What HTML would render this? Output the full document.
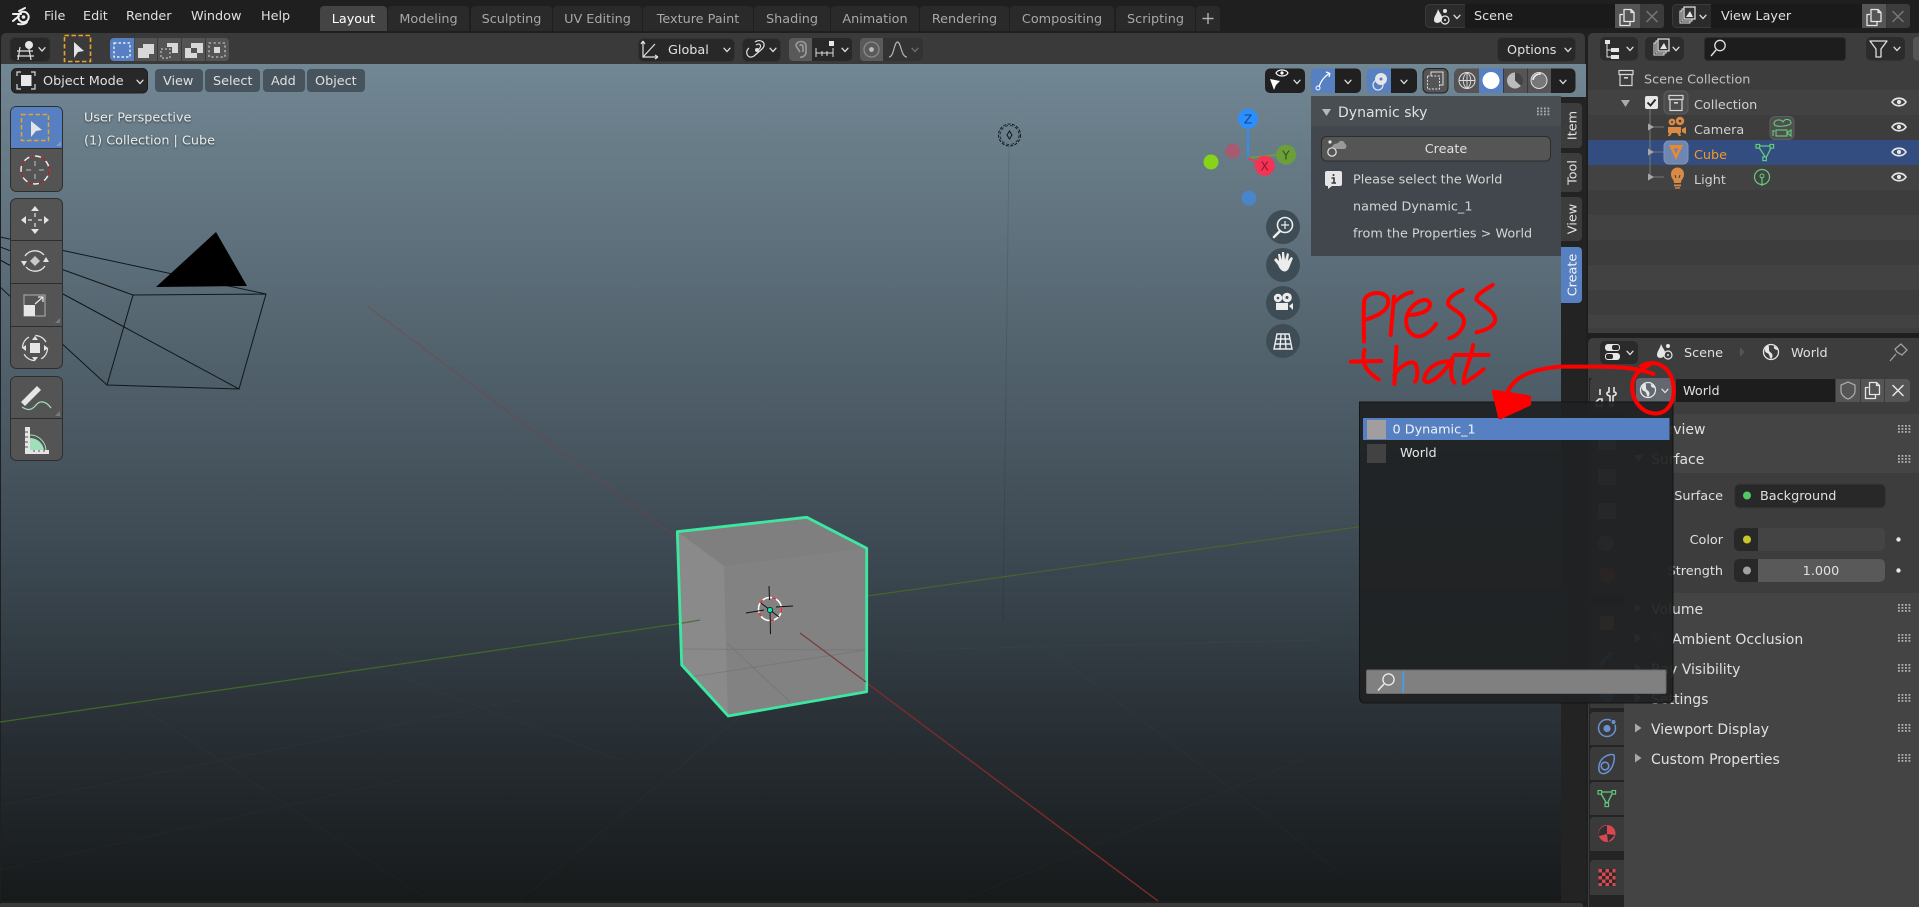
<!DOCTYPE html>
<html>
<head>
<meta charset="utf-8">
<title>Blender</title>
<style>
html,body{margin:0;padding:0;background:#1f1f1f;width:1919px;height:907px;overflow:hidden}
svg{display:block;position:absolute;left:0;top:0;filter:blur(.3px)}
text{font-family:"DejaVu Sans","Liberation Sans",sans-serif;font-size:12.8px;fill:#d9d9d9}
.tab{fill:#a8a8a8;text-anchor:middle}
.act{fill:#fff}
.m{fill:#e0e0e0}
.h{font-size:14px;fill:#e0e0e0}
.s{filter:drop-shadow(0 1px 1px rgba(0,0,0,.55))}
.red{fill:none;stroke:#f00;stroke-width:4;stroke-linecap:round;stroke-linejoin:round}
.red *{vector-effect:non-scaling-stroke}
</style>
</head>
<body>
<svg width="1919" height="907" viewBox="0 0 1919 907" xmlns="http://www.w3.org/2000/svg">
<defs>
<linearGradient id="bg" x1="0" y1="64" x2="0" y2="901" gradientUnits="userSpaceOnUse">
<stop offset="0" stop-color="#718793"/>
<stop offset=".3" stop-color="#566772"/>
<stop offset=".6" stop-color="#3b4750"/>
<stop offset=".85" stop-color="#23292d"/>
<stop offset="1" stop-color="#171a1b"/>
</linearGradient>
<g id="ch"><path d="M-3,-1.8 L0,1.6 L3,-1.8" fill="none" stroke="#dcdcdc" stroke-width="1.3" stroke-linecap="round" stroke-linejoin="round"/></g>
<g id="grip" fill="#b0b0b0"><rect x="0" y="0" width="1.8" height="1.8"/><rect x="3.5" y="0" width="1.8" height="1.8"/><rect x="7" y="0" width="1.8" height="1.8"/><rect x="10.5" y="0" width="1.8" height="1.8"/><rect x="0" y="3" width="1.8" height="1.8"/><rect x="3.5" y="3" width="1.8" height="1.8"/><rect x="7" y="3" width="1.8" height="1.8"/><rect x="10.5" y="3" width="1.8" height="1.8"/><rect x="0" y="6" width="1.8" height="1.8"/><rect x="3.5" y="6" width="1.8" height="1.8"/><rect x="7" y="6" width="1.8" height="1.8"/><rect x="10.5" y="6" width="1.8" height="1.8"/></g>
<g id="eye"><path d="M-7,0 C-4,-5 4,-5 7,0 C4,5 -4,5 -7,0 Z" fill="none" stroke="#e6e6e6" stroke-width="1.7"/><circle r="2.1" fill="#e6e6e6"/></g>
<g id="globe"><circle r="7.5" fill="none" stroke="#e6e6e6" stroke-width="1.3"/><path d="M-3,-7 C-7,-4 -7,0 -4,1 C-1,2 -2,5 0,7 C3,4 1,1 -1,0 C-3,-2 -1,-5 -3,-7 Z M3,-6 C2,-3 5,-2 7,-2 C6,-4 5,-5 3,-6 Z" fill="#e6e6e6"/></g>
<g id="scn"><path d="M-7,3 C-7,-1 -4,-3 -3,-8 C-1,-3 2,-1 1,2 C0,7 -7,7 -7,3 Z" fill="#e6e6e6"/><circle cx="4" cy="3" r="4" fill="none" stroke="#e6e6e6" stroke-width="1.2"/><circle cx="4" cy="3" r="1" fill="#e6e6e6"/><circle cx="4" cy="-6" r="2" fill="#e6e6e6"/></g>
<g id="vl"><rect x="-7" y="-5" width="10" height="12" fill="none" stroke="#e6e6e6" stroke-width="1"/><rect x="-5" y="-7" width="10" height="12" fill="#333" stroke="#e6e6e6" stroke-width="1"/><rect x="-3" y="-9" width="11" height="12" fill="#333" stroke="#e6e6e6" stroke-width="1.2"/><path d="M-1,1 L3,-5 L6,1 Z" fill="#e6e6e6"/></g>
<g id="copy"><path d="M-4,-3 L-7,-3 L-7,8 L3,8 L3,4 M-3,-8 L4,-8 L7,-5 L7,4 L-3,4 Z M4,-8 L4,-5 L7,-5" fill="none" stroke="#e6e6e6" stroke-width="1.3" stroke-linejoin="round"/></g>
<g id="x"><path d="M-5,-5 L5,5 M5,-5 L-5,5" fill="none" stroke-width="1.5" stroke-linecap="round"/></g>
<g id="tri"><path d="M-3,-4.5 L3.5,0 L-3,4.5 Z" fill="#a8a8a8"/></g>
<g id="coll"><rect x="-7" y="-7.5" width="14" height="4" fill="none" stroke="#d5d5d5" stroke-width="1.2"/><rect x="-6" y="-3.5" width="12" height="11" fill="none" stroke="#d5d5d5" stroke-width="1.2"/><rect x="-2" y="-1" width="4" height="1.6" fill="#d5d5d5"/></g>
</defs>

<!-- base -->
<rect width="1919" height="907" fill="#1f1f1f"/>

<!-- TOP BAR -->
<g>
<circle cx="23.5" cy="17" r="5.2" fill="none" stroke="#efefef" stroke-width="2"/>
<circle cx="23.5" cy="17" r="1.8" fill="#efefef"/>
<path d="M19,11 L25,8 M13,14 L21,14 M13,21 L19,16 M18,24 C21,24.5 25,24.5 27,22" fill="none" stroke="#efefef" stroke-width="2" stroke-linecap="round"/>
<text x="44" y="20" class="m">File</text>
<text x="83" y="20" class="m">Edit</text>
<text x="126" y="20" class="m">Render</text>
<text x="191" y="20" class="m">Window</text>
<text x="261" y="20" class="m">Help</text>

<path d="M320,31 V10 a4,4 0 0 1 4,-4 H383 a4,4 0 0 1 4,4 V31 Z" fill="#444"/>
<text x="353.5" y="23" class="tab act">Layout</text>
<g fill="#2a2a2a">
<path d="M388,31 V10 a4,4 0 0 1 4,-4 H465 a4,4 0 0 1 4,4 V31 Z"/>
<path d="M471,31 V10 a4,4 0 0 1 4,-4 H548 a4,4 0 0 1 4,4 V31 Z"/>
<path d="M553,31 V10 a4,4 0 0 1 4,-4 H638 a4,4 0 0 1 4,4 V31 Z"/>
<path d="M643,31 V10 a4,4 0 0 1 4,-4 H749 a4,4 0 0 1 4,4 V31 Z"/>
<path d="M754,31 V10 a4,4 0 0 1 4,-4 H826 a4,4 0 0 1 4,4 V31 Z"/>
<path d="M831,31 V10 a4,4 0 0 1 4,-4 H915 a4,4 0 0 1 4,4 V31 Z"/>
<path d="M920,31 V10 a4,4 0 0 1 4,-4 H1005 a4,4 0 0 1 4,4 V31 Z"/>
<path d="M1010,31 V10 a4,4 0 0 1 4,-4 H1110 a4,4 0 0 1 4,4 V31 Z"/>
<path d="M1116,31 V10 a4,4 0 0 1 4,-4 H1191 a4,4 0 0 1 4,4 V31 Z"/>
<path d="M1196,31 V10 a4,4 0 0 1 4,-4 H1216 a4,4 0 0 1 4,4 V31 Z"/>
</g>
<text x="428.5" y="23" class="tab">Modeling</text>
<text x="511.5" y="23" class="tab">Sculpting</text>
<text x="597.5" y="23" class="tab">UV Editing</text>
<text x="698" y="23" class="tab">Texture Paint</text>
<text x="792" y="23" class="tab">Shading</text>
<text x="875" y="23" class="tab">Animation</text>
<text x="964.5" y="23" class="tab">Rendering</text>
<text x="1062" y="23" class="tab">Compositing</text>
<text x="1155.5" y="23" class="tab">Scripting</text>
<path d="M1208,13 V24 M1202.5,18.5 H1213.5" stroke="#b0b0b0" stroke-width="1.4" fill="none"/>

<!-- scene selector -->
<rect x="1425.5" y="4.5" width="238" height="23" rx="4" fill="#2b2b2b" stroke="#3a3a3a"/>
<rect x="1465" y="4" width="150" height="24" fill="#1a1a1a"/>
<rect x="1615" y="4" width="25" height="24" fill="#555"/>
<rect x="1640" y="4" width="24" height="24" rx="3" fill="#3c3c3c"/>
<use href="#scn" x="1441" y="17"/><use href="#ch" x="1457" y="17"/>
<text x="1474" y="20" class="m">Scene</text>
<use href="#copy" x="1627" y="17.5"/>
<use href="#x" x="1652" y="16.5" stroke="#777"/>
<rect x="1672.5" y="4.5" width="237" height="23" rx="4" fill="#2b2b2b" stroke="#3a3a3a"/>
<rect x="1711" y="4" width="151" height="24" fill="#1a1a1a"/>
<rect x="1862" y="4" width="24" height="24" fill="#555"/>
<rect x="1886" y="4" width="24" height="24" rx="3" fill="#3c3c3c"/>
<use href="#vl" x="1687" y="16"/><use href="#ch" x="1703" y="17"/>
<text x="1721" y="20" class="m">View Layer</text>
<use href="#copy" x="1874" y="17.5"/>
<use href="#x" x="1898" y="16.5" stroke="#777"/>
</g>

<!-- 3D VIEW HEADER -->
<path d="M1,64 V38 a5,5 0 0 1 5,-5 H1580 a5,5 0 0 1 5,5 V64 Z" fill="#3a3a3a"/>
<rect x="1" y="64" width="1585" height="837" fill="url(#bg)"/>

<!-- header items -->
<rect x="10" y="37.5" width="40" height="24" rx="5" fill="#282828" stroke="#333"/>
<circle cx="29" cy="45" r="4" fill="#e6e6e6"/>
<path d="M17,51 H33 M17,56 H34 M20,47 L18,60 M29,49 L31,60" stroke="#e0e0e0" stroke-width="1.2" fill="none"/>
<use href="#ch" x="42" y="49.5"/>
<rect x="64.5" y="35.5" width="26" height="26" fill="none" stroke="#e8a32b" stroke-width="1.6" stroke-dasharray="4.5 2.5"/>
<path d="M74,42 L84,51 L78,52 L74,58 Z" fill="#e4e4e4"/>

<path d="M114,38 H134 V61 H114 a4,4 0 0 1 -4,-4 V42 a4,4 0 0 1 4,-4 Z" fill="#5680c2"/>
<rect x="134.5" y="38" width="22.5" height="23" fill="#545454"/>
<rect x="158" y="38" width="23" height="23" fill="#545454"/>
<rect x="182" y="38" width="23" height="23" fill="#545454"/>
<path d="M206,38 H225 a4,4 0 0 1 4,4 V57 a4,4 0 0 1 -4,4 H206 Z" fill="#545454"/>
<rect x="114" y="43" width="16" height="14" fill="none" stroke="#fff" stroke-width="1.2" stroke-dasharray="2.5 2"/>
<path d="M143,44 H154 V54 H149 V58 H138 V48 H143 Z" fill="#d8d8d8"/>
<path d="M167,43 H178 V53 H172 V47 H167 Z" fill="#d8d8d8"/><rect x="161" y="49" width="9" height="9" fill="none" stroke="#d8d8d8" stroke-dasharray="2 2"/>
<path d="M191,43 H203 V53 H197 V58 H185 V48 H191 Z M191,48 V53 H197 V48 Z" fill="#d8d8d8" fill-rule="evenodd"/>
<rect x="209" y="43" width="16" height="14" fill="none" stroke="#d8d8d8" stroke-width="1.1" stroke-dasharray="2.2 2.4"/>
<rect x="214" y="47" width="6" height="6" fill="#d8d8d8"/>

<!-- center header -->
<rect x="638.5" y="38.5" width="96" height="23" rx="5" fill="#282828" stroke="#333"/>
<path d="M643,41 L643,57 L658,57 M643,57 L655,44 M643,41 l-2,3 M643,41 l2,3 M658,57 l-3,-2 M658,57 l-3,2" fill="none" stroke="#e0e0e0" stroke-width="1.2"/>
<text x="668" y="54" class="m">Global</text>
<use href="#ch" x="727" y="50"/>
<rect x="742.5" y="38.5" width="38" height="23" rx="5" fill="#282828" stroke="#333"/>
<path d="M755,42 C760,38 768,43 762,49 L754,56 C748,60 744,52 749,48 M756,45 C761,42 762,47 758,50" fill="none" stroke="#e0e0e0" stroke-width="1.2"/>
<circle cx="757" cy="50" r="2" fill="#e0e0e0"/>
<use href="#ch" x="773" y="50"/>
<path d="M793,38 H812 V61 H793 a4,4 0 0 1 -4,-4 V42 a4,4 0 0 1 4,-4 Z" fill="#595959"/>
<path d="M812,38 H848 a4,4 0 0 1 4,4 V57 a4,4 0 0 1 -4,4 H812 Z" fill="#282828"/>
<path d="M796,46 C796,40 806,40 806,46 L806,52 C806,55 803,58 800,57 M800,46 C800,44 803,44 803,47 L803,52 M796,46 L800,52" fill="none" stroke="#9b9b9b" stroke-width="1.6"/>
<rect x="829" y="41" width="5" height="5" fill="#e6e6e6"/>
<path d="M816,48 V57 M833,48 V57 M816,53 H833 M822,51 V56 M827,51 V56" stroke="#dcdcdc" fill="none"/>
<use href="#ch" x="845" y="50"/>
<path d="M864,38 H883 V61 H864 a4,4 0 0 1 -4,-4 V42 a4,4 0 0 1 4,-4 Z" fill="#5a5a5a"/>
<path d="M883,38 H919 a4,4 0 0 1 4,4 V57 a4,4 0 0 1 -4,4 H883 Z" fill="#333"/>
<circle cx="871.5" cy="49.5" r="7.5" fill="none" stroke="#8a8a8a" stroke-width="1.3"/><circle cx="871.5" cy="49.5" r="2.4" fill="#bbb"/>
<path d="M889,57 C894,57 894,42 897.5,42 C901,42 901,57 907,57" fill="none" stroke="#b5b5b5" stroke-width="1.2"/>
<use href="#ch" x="915" y="50" opacity=".35"/>
<rect x="1497.5" y="37.5" width="78" height="24" rx="5" fill="#282828" stroke="#333"/>
<text x="1507" y="54" class="m">Options</text>
<use href="#ch" x="1568" y="50"/>

<!-- axes & grid -->
<g fill="none" stroke-width="1">
<path d="M0,805 L520,700 M0,870 L400,780 M520,900 L760,700 M130,700 L430,901 M330,650 L620,760 M1050,650 L1350,880 M960,901 L1300,760 M900,650 L1320,640" stroke="#fff" stroke-opacity=".025"/>
<path d="M1009,147 L1003,620" stroke="#000" stroke-opacity=".1"/>
<path d="M367,306 L677,538" stroke="#8a3a3e" stroke-opacity=".45" stroke-width="1.2"/>
<path d="M800,633 L1158,901" stroke="#7b2c2c" stroke-width="1.4"/>
<path d="M0,722 L677,624" stroke="#41662a" stroke-width="1.3"/>
<path d="M867,596 L1365,526" stroke="#45652e" stroke-width="1.2"/>
</g>

<!-- camera -->
<g fill="none" stroke="#10171b" stroke-width="1">
<path d="M0,237 L266,294 L239,389 L107,385 L133,295 L266,294"/>
<path d="M0,247 L133,295 M0,260 L239,389 M0,287 L107,385"/>
</g>
<path d="M216,232 L156,287 L247,286 Z" fill="#000"/>

<!-- light icon -->
<g fill="none" stroke="#12181c" stroke-width="1">
<circle cx="1009.5" cy="135" r="11" stroke-dasharray="3 1.5" stroke-width="1"/>
<circle cx="1009.5" cy="135" r="9.5" stroke-dasharray="3 2" stroke-width=".8"/>
<path d="M1009.5,131 L1012,135 L1009.5,139 L1007,135 Z"/>
</g>

<!-- cube -->
<path d="M677.3,531.7 L806.7,517.3 L866.7,548.3 L866.7,691.7 L728.3,716 L681.7,665 Z" fill="#858585"/>
<path d="M677.3,531.7 L806.7,517.3 L866.7,548.3 L724,566 Z" fill="#7f7f7f"/>
<path d="M677.3,531.7 L724,566 L728,716 L681.7,665 Z" fill="#8a8a8a"/>
<path d="M724,566 L866.7,548.3 L866.7,691.7 L728,716 Z" fill="#828282"/>
<path d="M682,649 L866,650 M690,677 L866,650 M727,643 L790,702" stroke="#5f6666" stroke-opacity=".35" fill="none"/>
<path d="M677,624 L700,620" stroke="#4a6f38" stroke-width="1.2"/>
<path d="M677.3,531.7 L806.7,517.3 L866.7,548.3 L866.7,691.7 L728.3,716 L681.7,665 Z" fill="none" stroke="#3ce8a0" stroke-width="2.8" stroke-linejoin="round"/>
<path d="M800,633 L866,682" stroke="#7a3a3a" stroke-width="1.2"/>
<!-- 3D cursor -->
<g>
<circle cx="770" cy="609" r="11.5" fill="none" stroke="#fff" stroke-width="1.6"/>
<circle cx="770" cy="609" r="11.5" fill="none" stroke="#e52d2d" stroke-width="1.6" stroke-dasharray="4 10"/>
<path d="M769,586 L769.5,600 M770,610 L770.5,634 M746,613 L764,610 M776,607 L793,606 M761,603 L779,617" stroke="#111" stroke-width="1"/>
<circle cx="770" cy="610" r="2.6" fill="#12e4a0" stroke="#0a0a0a" stroke-width=".7"/>
</g>

<!-- header row in viewport -->
<rect x="11.5" y="68.5" width="136" height="24.5" rx="5" fill="#282828" stroke="#1e1e1e"/>
<rect x="21" y="75" width="10.5" height="11" fill="#e8e8e8"/>
<path d="M17,76 V72 H21 M31,72 H35 V76 M17,84 V89 H21 M31,89 H35 V84" fill="none" stroke="#d8d8d8" stroke-width="1.2"/>
<text x="43" y="85" class="m">Object Mode</text>
<use href="#ch" x="140" y="82"/>
<g fill="#47545d">
<rect x="155" y="69" width="48" height="23" rx="4"/>
<rect x="205" y="69" width="55" height="23" rx="4"/>
<rect x="263" y="69" width="42" height="23" rx="4"/>
<rect x="307" y="69" width="58" height="23" rx="4"/>
</g>
<text x="163" y="85" class="m">View</text>
<text x="213" y="85" class="m">Select</text>
<text x="271" y="85" class="m">Add</text>
<text x="315" y="85" class="m">Object</text>

<!-- right overlays header -->
<rect x="1265" y="68.5" width="40" height="24.5" rx="5" fill="#202020"/>
<path d="M1276,73 C1278,69 1286,69 1288,73 C1286,77 1278,77 1276,73 Z" fill="none" stroke="#fff" stroke-width="1.2"/><circle cx="1282" cy="73" r="1.6" fill="#fff"/>
<path d="M1270,79 L1280,81 L1276,85 L1274,90 Z" fill="#fff"/>
<use href="#ch" x="1297" y="82"/>
<rect x="1311" y="68.5" width="50" height="24.5" rx="5" fill="#202020"/>
<path d="M1315,68.5 H1335 V93 H1315 a4,4 0 0 1 -4,-4 V72.5 a4,4 0 0 1 4,-4 Z" fill="#5680c2"/>
<path d="M1319,87 C1321,80 1325,76 1330,73 M1329,73 L1326,72 M1330,73 L1329,77" fill="none" stroke="#fff" stroke-width="1.2"/><circle cx="1318" cy="88" r="2" fill="none" stroke="#fff"/>
<use href="#ch" x="1348" y="82"/>
<rect x="1367" y="68.5" width="50" height="24.5" rx="5" fill="#202020"/>
<path d="M1371,68.5 H1391 V93 H1371 a4,4 0 0 1 -4,-4 V72.5 a4,4 0 0 1 4,-4 Z" fill="#5680c2"/>
<circle cx="1381" cy="79" r="6" fill="#e6e6e6"/><circle cx="1378" cy="85" r="5" fill="none" stroke="#e6e6e6" stroke-width="1.2"/><circle cx="1381" cy="79" r="1.5" fill="#5680c2"/>
<use href="#ch" x="1404" y="82"/>
<rect x="1423" y="68.5" width="25" height="24.5" rx="5" fill="#555" stroke="#222"/>
<rect x="1431" y="72" width="12" height="13" fill="none" stroke="#e0e0e0"/><rect x="1427.5" y="76" width="12" height="13" fill="#555" stroke="#e0e0e0" stroke-dasharray="2 1.4"/>
<rect x="1454.5" y="68.5" width="121" height="24.5" rx="5" fill="#202020"/>
<path d="M1459,68.5 H1479 V93 H1459 a4,4 0 0 1 -4,-4 V72.5 a4,4 0 0 1 4,-4 Z" fill="#555"/>
<rect x="1479" y="68.5" width="24" height="24.5" fill="#5680c2"/>
<rect x="1503.5" y="68.5" width="23.5" height="24.5" fill="#555"/>
<rect x="1527.5" y="68.5" width="23.5" height="24.5" fill="#555"/>
<circle cx="1467" cy="80.5" r="8" fill="none" stroke="#ddd" stroke-width="1"/><path d="M1459,80.5 H1475 M1467,72.5 V88.5 M1467,72.5 C1462,76 1462,85 1467,88.5 M1467,72.5 C1472,76 1472,85 1467,88.5" fill="none" stroke="#ddd" stroke-width=".9"/>
<circle cx="1491" cy="80.5" r="8.5" fill="#fff"/>
<circle cx="1515" cy="80.5" r="8" fill="#bbb"/><path d="M1515,72.5 A8,8 0 0 1 1521,86 L1515,80.5 Z" fill="#444"/>
<circle cx="1539" cy="80.5" r="8" fill="#777" stroke="#ddd"/><path d="M1533,80 A7,7 0 0 1 1541,74" fill="none" stroke="#eee" stroke-width="1.6"/>
<use href="#ch" x="1563" y="82"/>

<!-- Text overlay -->
<text x="84" y="121.5" class="s m" style="fill:#ececec">User Perspective</text>
<text x="84" y="144.5" class="s m" style="fill:#ececec">(1) Collection | Cube</text>

<!-- Toolbar -->
<g>
<rect x="10.5" y="106.5" width="52" height="85" rx="6" fill="#545454" stroke="#2e2e2e"/>
<path d="M11,148 V112 a5,5 0 0 1 5,-5 H57 a5,5 0 0 1 5,5 V148 Z" fill="#5680c2"/>
<path d="M11,148.5 H62" stroke="#2e2e2e"/>
<path d="M61,141 v5 h-5 Z" fill="#7f9ccf"/>
<rect x="21.5" y="114.5" width="27" height="26" fill="none" stroke="#e8a32b" stroke-width="1.5" stroke-dasharray="4.5 2.5"/>
<path d="M31,121 L42,130 L36,131 L31,137 Z" fill="#e4e4e4"/>
<circle cx="35" cy="170" r="14" fill="none" stroke="#efefef" stroke-width="1.5"/>
<circle cx="35" cy="170" r="14" fill="none" stroke="#8f2a2a" stroke-width="1.6" stroke-dasharray="6 6"/>
<path d="M35,161 V166 M35,174 V179 M26,170 H31 M39,170 H44" stroke="#a9a9a9" stroke-width="1.3"/>
<rect x="10.5" y="198.5" width="52" height="170" rx="6" fill="#545454" stroke="#2e2e2e"/>
<path d="M11,240.5 H62 M11,283.5 H62 M11,326.5 H62" stroke="#2e2e2e"/>
<path d="M35,206 l4,5 h-8 Z M35,234 l4,-5 h-8 Z M21,220 l5,-4 v8 Z M49,220 l-5,-4 v8 Z" fill="#e4e4e4"/>
<path d="M35,213 V217 M35,223 V227 M28,220 H32 M38,220 H42" stroke="#e4e4e4" stroke-width="1.2"/>
<path d="M35,256 l5,5 -5,5 -5,-5 Z" fill="#c8c8c8"/>
<path d="M25,256 A12,12 0 0 1 44,255 M45,266 A12,12 0 0 1 26,267" fill="none" stroke="#e4e4e4" stroke-width="1.3"/>
<path d="M21,261 h6 l-3,5 Z M49,262 h-6 l3,-5 Z" fill="#e4e4e4"/>
<rect x="24" y="295" width="21" height="21" fill="none" stroke="#a0a0a0" stroke-width="1.2"/>
<rect x="24" y="305" width="11" height="11" fill="#e6e6e6"/>
<path d="M35,304 L43,297 M38,297 H43 V302" fill="none" stroke="#e6e6e6" stroke-width="1.3"/>
<path d="M60,318 v5 h-5 Z" fill="#7a7a7a"/>
<rect x="30" y="343" width="10" height="10" fill="#e6e6e6"/>
<circle cx="35" cy="348" r="12.5" fill="none" stroke="#e0e0e0" stroke-width="1.3" stroke-dasharray="13 6.6"/>
<path d="M35,336 l3,4 h-6 Z M35,361 l3,-4 h-6 Z M22,348 l4,-3 v6 Z M48,348 l-4,-3 v6 Z" fill="#e4e4e4"/>
<rect x="10.5" y="376.5" width="52" height="84" rx="6" fill="#545454" stroke="#2e2e2e"/>
<path d="M11,418.5 H62" stroke="#2e2e2e"/>
<path d="M21,402 L37,386 L41,390 L25,406 Z" fill="#e6e6e6"/>
<path d="M22,407 C28,411 32,410 36,405 C40,400 46,401 51,408" fill="none" stroke="#9fe0bb" stroke-width="1.3"/>
<path d="M60,411 v5 h-5 Z" fill="#7a7a7a"/>
<path d="M25,427 H30 V450 H49 V454 H25 Z" fill="#e4e4e4"/>
<path d="M30,438 A14,14 0 0 1 44,450 H30 Z" fill="#9fe0bb"/>
<path d="M30,435 A16,16 0 0 1 46,450" fill="none" stroke="#9fe0bb"/>
<path d="M25,432 h3 M25,437 h3 M25,442 h3 M25,447 h3 M34,452 v-2 M39,452 v-2 M44,452 v-2" stroke="#545454" fill="none"/>
</g>

<!-- Gizmo -->
<g>
<circle cx="1232.7" cy="151" r="7.5" fill="#a85a70"/>
<circle cx="1211" cy="162" r="7.5" fill="#86d41a"/>
<circle cx="1249" cy="198" r="7.5" fill="#4a85c9"/>
<path d="M1248,158 V129" stroke="#2c8fff" stroke-width="1.8"/>
<path d="M1248,158 L1276,155" stroke="#6c9e3a" stroke-width="1.8"/>
<path d="M1248,158 L1258,163" stroke="#f53355" stroke-width="1.8"/>
<circle cx="1248" cy="118.7" r="10" fill="#2c8fff"/>
<circle cx="1286" cy="154.7" r="10" fill="#6c9e3a"/>
<circle cx="1264.7" cy="165.7" r="10" fill="#f53355"/>
<text x="1248" y="123.5" text-anchor="middle" style="font-size:12.5px;fill:#12467f">Z</text>
<text x="1286" y="159.5" text-anchor="middle" style="font-size:12.5px;fill:#37541c">Y</text>
<text x="1264.7" y="170.5" text-anchor="middle" style="font-size:12.5px;fill:#8c1b30">X</text>
</g>

<!-- nav buttons -->
<g fill="#3e4c55">
<circle cx="1283" cy="227" r="17"/><circle cx="1283" cy="265" r="17"/><circle cx="1283" cy="303" r="17"/><circle cx="1283" cy="341" r="17"/>
</g>
<g>
<circle cx="1285" cy="225" r="7.5" fill="none" stroke="#ececec" stroke-width="1.6"/>
<path d="M1285,221 V229 M1281,225 H1289" stroke="#ececec" stroke-width="1.2"/>
<path d="M1280,231 L1274,237" stroke="#ececec" stroke-width="2.6" stroke-linecap="round"/>
<path d="M1278,265 L1274,260 L1276,258 L1279,261 L1278,254 L1280,254 L1282,260 L1282,252 L1284,252 L1285,260 L1287,253 L1289,254 L1288,261 L1291,257 L1293,258 L1289,268 C1287,273 1281,273 1278,265 Z" fill="#ececec"/>
<circle cx="1278" cy="298" r="4.2" fill="#ececec"/><circle cx="1287" cy="297.5" r="4.8" fill="#ececec"/><circle cx="1278" cy="298" r="1.3" fill="#3e4c55"/><circle cx="1287" cy="297.5" r="1.5" fill="#3e4c55"/>
<rect x="1276" y="303" width="12" height="7" fill="#ececec"/><path d="M1289,306 L1293,303 V310 Z" fill="#ececec"/>
<path d="M1277,334 H1289 L1292,349 H1274 Z M1275.5,339 H1290.5 M1275,344 H1291 M1281,334 L1280,349 M1285,334 L1286,349" fill="none" stroke="#ececec" stroke-width="1.4"/>
</g>

<!-- N panel -->
<rect x="1561" y="97" width="25" height="804" fill="#232323"/>
<rect x="1311" y="96" width="250" height="160" fill="#41474c"/>
<rect x="1311" y="96" width="250" height="30" fill="#494e52"/>
<path d="M1322,109 H1331 L1326.5,116 Z" fill="#b8b8b8"/>
<text x="1338" y="117" class="h">Dynamic sky</text>
<use href="#grip" x="1537" y="107.5"/>
<rect x="1321.5" y="136.5" width="229" height="24.5" rx="5" fill="#555" stroke="#2d2d2d"/>
<text x="1446" y="153" text-anchor="middle" class="m">Create</text>
<circle cx="1332" cy="152" r="4.2" fill="none" stroke="#e6e6e6" stroke-width="1.2"/>
<circle cx="1330" cy="142" r="1.6" fill="#e6e6e6"/>
<path d="M1332,147 C1333,143 1337,144 1338,143 C1340,140 1344,140 1345,144 C1347,144 1347,149 1344,149 H1336 Z" fill="#9a9a9a"/>
<path d="M1327,171 H1340 a2,2 0 0 1 2,2 V184 a2,2 0 0 1 -2,2 H1332 L1328,189 V186 H1327 a2,2 0 0 1 -2,-2 V173 a2,2 0 0 1 2,-2 Z" fill="#e6e6e6"/>
<path d="M1333.5,174 V176 M1331.5,178 H1334 V183 M1331.5,183 H1336" stroke="#3a3a3a" stroke-width="1.6" fill="none"/>
<text x="1353" y="183.5" style="fill:#d4d4d4">Please select the World</text>
<text x="1353" y="210.5" style="fill:#d4d4d4">named Dynamic_1</text>
<text x="1353" y="237.5" style="fill:#d4d4d4">from the Properties &gt; World</text>

<!-- sidebar tabs -->
<path d="M1561,103 H1578 a4,4 0 0 1 4,4 V144 a4,4 0 0 1 -4,4 H1561 Z" fill="#3c3c3c"/>
<path d="M1561,153 H1578 a4,4 0 0 1 4,4 V188 a4,4 0 0 1 -4,4 H1561 Z" fill="#3c3c3c"/>
<path d="M1561,197 H1578 a4,4 0 0 1 4,4 V237 a4,4 0 0 1 -4,4 H1561 Z" fill="#3c3c3c"/>
<path d="M1561,247 H1578 a4,4 0 0 1 4,4 V299 a4,4 0 0 1 -4,4 H1561 Z" fill="#5680c2"/>
<text transform="translate(1576.5,125.5) rotate(-90)" text-anchor="middle" class="m">Item</text>
<text transform="translate(1576.5,172.5) rotate(-90)" text-anchor="middle" class="m">Tool</text>
<text transform="translate(1576.5,219) rotate(-90)" text-anchor="middle" class="m">View</text>
<text transform="translate(1576.5,275) rotate(-90)" text-anchor="middle" class="m" style="fill:#f2f2f2">Create</text>

<!-- status bar strip -->
<path d="M0,907 V905 a2,2 0 0 1 2,-2 H1580 a3,3 0 0 1 3,3 V907 Z" fill="#3a3a3a"/>

<!-- OUTLINER -->
<path d="M1588,333 V38 a5,5 0 0 1 5,-5 H1919 V333 Z" fill="#3d3d3d"/>
<g fill="#424242">
<rect x="1588" y="90" width="331" height="25"/>
<rect x="1588" y="165" width="331" height="25"/>
<rect x="1588" y="215" width="331" height="25"/>
<rect x="1588" y="265" width="331" height="25"/>
<rect x="1588" y="315" width="331" height="13"/>
</g>
<rect x="1588" y="140" width="331" height="25" fill="#334d80"/>
<rect x="1600" y="37" width="38" height="23.5" rx="5" fill="#2c2c2c"/>
<path d="M1605,40 h5 v4 h-5 Z M1611,48 h8 v4 h-8 Z M1611,55 h8 v4 h-8 Z" fill="#e4e4e4"/><path d="M1607,44 V57 H1611 M1607,50 H1611" stroke="#e4e4e4" fill="none"/>
<use href="#ch" x="1630" y="49"/>
<rect x="1645" y="37" width="39" height="23.5" rx="5" fill="#2c2c2c"/>
<use href="#vl" x="1661" y="48"/><use href="#ch" x="1676" y="49"/>
<rect x="1704.5" y="37.5" width="141" height="23" rx="3" fill="#1d1d1d" stroke="#2d2d2d"/>
<circle cx="1720" cy="45.5" r="5.2" fill="none" stroke="#e0e0e0" stroke-width="1.3"/><path d="M1716,50 L1711,56" stroke="#e0e0e0" stroke-width="1.4"/>
<rect x="1866" y="37" width="39" height="23.5" rx="5" fill="#2c2c2c"/>
<path d="M1870,41 H1887 L1881,49 V57 L1876,57 V49 Z" fill="none" stroke="#e0e0e0" stroke-width="1.3" stroke-linejoin="round"/>
<use href="#ch" x="1897" y="49"/>
<rect x="1913" y="37" width="10" height="23.5" rx="4" fill="#555"/>

<use href="#coll" x="1626" y="78"/>
<text x="1644" y="83.5" style="fill:#c0c0c0">Scene Collection</text>
<path d="M1621,100 H1630 L1625.5,107 Z" fill="#aaa"/>
<rect x="1645" y="96" width="13" height="13" rx="2" fill="#e6e6e6"/><path d="M1647.5,102.5 L1650.5,105.5 L1655.5,99.5" fill="none" stroke="#222" stroke-width="1.8"/>
<rect x="1664" y="91" width="24" height="23" rx="5" fill="#4c4c4c" stroke="#5c5c5c"/>
<use href="#coll" x="1676" y="103"/>
<text x="1694" y="109" style="fill:#d0d0d0">Collection</text>
<path d="M1650,109 V178 M1650,127 H1664 M1650,152 H1664 M1650,177 H1664" stroke="#787878" fill="none"/>
<path d="M1648,123.5 l6,3.5 -6,3.5 Z M1648,148.5 l6,3.5 -6,3.5 Z M1648,173.5 l6,3.5 -6,3.5 Z" fill="#a8a8a8"/>
<g fill="#d98a44">
<circle cx="1672" cy="122" r="3.4"/><circle cx="1680" cy="121" r="4.2"/><rect x="1668" y="127" width="13" height="6"/><path d="M1682,129 L1686,127 V134 L1682,132 Z"/><path d="M1669,133 h3 l-2,3 h-2 Z M1677,133 h3 l1,3 h-2 Z"/>
</g>
<circle cx="1672" cy="122" r="1" fill="#3d3d3d"/><circle cx="1680" cy="121" r="1.3" fill="#3d3d3d"/>
<text x="1694" y="134" style="fill:#d0d0d0">Camera</text>
<rect x="1770" y="116.5" width="24" height="23" rx="5" fill="#4f4f4f" stroke="#5f5f5f"/>
<g fill="none" stroke="#63cc7c" stroke-width="1.1">
<path d="M1774,124 C1774,119 1781,119 1783,122 C1785,118 1791,119 1791,123 C1791,126 1775,128 1774,124 Z"/>
<rect x="1776" y="130" width="11" height="6"/><path d="M1787,133 L1791,130 V136 Z M1775,131 h-2 M1773,130 V136"/>
</g>
<rect x="1664" y="141" width="24" height="23" rx="5" fill="#6e86b0" stroke="#7f95bb"/>
<path d="M1669,145 H1683 L1676,160 Z M1673.5,148.5 H1678.5 L1676,154 Z" fill="#e78b33" fill-rule="evenodd"/>
<text x="1694" y="159" style="fill:#f39a23">Cube</text>
<g fill="none" stroke="#63cc7c" stroke-width="1.3">
<path d="M1758,146 H1772 L1766,158 Z"/>
</g>
<g fill="#334d80" stroke="#63cc7c" stroke-width="1.2">
<rect x="1756" y="144.5" width="3.6" height="3.6"/><rect x="1770" y="144.5" width="3.6" height="3.6"/><rect x="1762.8" y="157" width="3.6" height="3.6"/>
</g>
<g fill="#d98a44">
<path d="M1671,174 a6.5,6.5 0 1 1 13,0 C1684,179 1681,179 1681,183 H1674 C1674,179 1671,179 1671,174 Z"/>
<rect x="1674" y="184.5" width="7" height="1.8"/><rect x="1675" y="187.2" width="5" height="1.4"/>
</g>
<path d="M1675,175 L1676,178 M1680,175 L1679,178" stroke="#3d3d3d" stroke-width="1" fill="none"/>
<text x="1694" y="184" style="fill:#d0d0d0">Light</text>
<circle cx="1762" cy="177" r="7.5" fill="none" stroke="#63cc7c" stroke-width="1.2"/>
<path d="M1762,177 V186" stroke="#63cc7c" stroke-width="1.2"/><circle cx="1762" cy="176" r="2" fill="none" stroke="#63cc7c"/>
<use href="#eye" x="1899" y="102"/><use href="#eye" x="1899" y="127"/><use href="#eye" x="1899" y="152"/><use href="#eye" x="1899" y="177"/>

<!-- PROPERTIES -->
<path d="M1588,907 V343 a5,5 0 0 1 5,-5 H1919 V907 Z" fill="#3d3d3d"/>
<rect x="1600" y="341" width="38" height="23" rx="5" fill="#2a2a2a"/>
<rect x="1605" y="344" width="15" height="7" rx="3" fill="#e6e6e6"/><rect x="1605" y="353" width="15" height="7" rx="3" fill="#e6e6e6"/>
<rect x="1606" y="354" width="7" height="5" rx="2" fill="#2a2a2a"/><rect x="1612" y="345" width="7" height="5" rx="2" fill="#2a2a2a"/>
<use href="#ch" x="1630" y="353"/>
<use href="#scn" x="1664" y="352"/>
<text x="1684" y="357" class="m">Scene</text>
<path d="M1740,347 l4.5,5 -4.5,5 Z" fill="#555"/>
<use href="#globe" x="1771" y="352"/>
<text x="1791" y="357" class="m">World</text>
<path d="M1895,349 L1901,344 L1907,350 L1902,355 L1897,352 Z M1896,354 L1890,361" fill="none" stroke="#a0a0a0" stroke-width="1.3"/>

<!-- tabs col -->
<rect x="1589" y="378" width="35" height="529" fill="#242424"/>
<path d="M1624,378 H1594 a4,4 0 0 0 -4,4 V412 H1624 Z" fill="#3d3d3d"/>
<g fill="#3a3a3a">
<path d="M1624,712 H1594 a4,4 0 0 0 -4,4 V745 H1624 Z"/>
<path d="M1624,747 H1594 a4,4 0 0 0 -4,4 V780 H1624 Z"/>
<path d="M1624,782 H1594 a4,4 0 0 0 -4,4 V815 H1624 Z"/>
<path d="M1624,817 H1594 a4,4 0 0 0 -4,4 V851 H1624 Z"/>
<path d="M1624,860 H1594 a4,4 0 0 0 -4,4 V895 H1624 Z"/>
<path d="M1624,425 H1594 a4,4 0 0 0 -4,4 V595 H1624 Z"/>
<path d="M1624,605 H1594 a4,4 0 0 0 -4,4 V708 H1624 Z"/>
</g>
<path d="M1600,389 V395 M1599,399 h3 v7 h-6 v-4 Z M1609,387 V392 C1606,392 1606,395 1610,396 V406 H1613 V396 C1617,395 1617,392 1614,392 V387" stroke="#e6e6e6" fill="none" stroke-width="1.6"/>
<!-- faint tabs beneath popup -->
<rect x="1598" y="436" width="18" height="14" fill="#777"/>
<rect x="1598" y="469" width="18" height="16" fill="#777"/>
<rect x="1598" y="503" width="18" height="16" fill="#777"/>
<circle cx="1606" cy="543" r="8" fill="#777"/>
<circle cx="1607" cy="575" r="8" fill="#c84a4a"/>
<rect x="1600" y="616" width="14" height="14" fill="#c87a3a"/>
<path d="M1600,665 L1612,652" stroke="#5680c2" stroke-width="4"/>
<circle cx="1607" cy="695" r="7" fill="#5680c2"/>
<circle cx="1607" cy="728" r="8.5" fill="none" stroke="#6a92d0" stroke-width="1.5"/>
<circle cx="1607" cy="728.5" r="3.6" fill="#6a92d0"/><circle cx="1613.5" cy="722" r="2.5" fill="#6a92d0" stroke="#3a3a3a"/>
<path d="M1599,766 C1600,757 1610,753 1614,755 C1615,760 1613,770 1606,773 C1601,775 1598,772 1599,766 Z" fill="none" stroke="#6a92d0" stroke-width="1.5"/>
<circle cx="1605" cy="766" r="3.8" fill="none" stroke="#6a92d0" stroke-width="1.6"/>
<path d="M1600,792 H1613 L1607,804 Z" fill="none" stroke="#63cc7c" stroke-width="1.3"/>
<g fill="#3a3a3a" stroke="#63cc7c" stroke-width="1.1"><rect x="1598" y="790.5" width="3.6" height="3.6"/><rect x="1612" y="790.5" width="3.6" height="3.6"/><rect x="1605" y="803" width="3.6" height="3.6"/></g>
<circle cx="1607" cy="833.5" r="8.5" fill="#d9484f"/>
<path d="M1607,825.5 V834 L1599,836 C1598,830 1602,826 1607,825.5 Z M1607,834 L1615,835 L1608,842 Z" fill="#303030"/>
<g fill="#d9484f"><rect x="1598.5" y="869" width="17" height="17"/></g>
<g fill="#2a2a2a"><rect x="1602" y="869" width="3.5" height="3.5"/><rect x="1609" y="869" width="3.5" height="3.5"/><rect x="1598.5" y="872.5" width="3.5" height="3.5"/><rect x="1605.5" y="872.5" width="3.5" height="3.5"/><rect x="1612" y="872.5" width="3.5" height="3.5"/><rect x="1602" y="876" width="3.5" height="3.5"/><rect x="1609" y="876" width="3.5" height="3.5"/><rect x="1598.5" y="879.5" width="3.5" height="3.5"/><rect x="1605.5" y="879.5" width="3.5" height="3.5"/><rect x="1612" y="879.5" width="3.5" height="3.5"/><rect x="1602" y="883" width="3.5" height="3"/><rect x="1609" y="883" width="3.5" height="3"/></g>

<!-- main panel -->
<rect x="1624" y="378" width="295" height="529" fill="#444"/>
<rect x="1624" y="378" width="295" height="36" fill="#3d3d3d"/>
<path d="M1640,378 H1668 a4,4 0 0 1 4,4 V398 a4,4 0 0 1 -4,4 H1640 a4,4 0 0 1 -4,-4 V382 a4,4 0 0 1 4,-4 Z" fill="#636870"/>
<use href="#globe" x="1648" y="390"/>
<use href="#ch" x="1665" y="391"/>
<rect x="1676" y="379" width="159" height="23" fill="#1d1d1d"/>
<text x="1683" y="395" class="m">World</text>
<rect x="1836" y="379" width="24" height="23" fill="#555"/>
<rect x="1861" y="379" width="23" height="23" fill="#555"/>
<path d="M1885,379 H1906 a4,4 0 0 1 4,4 V398 a4,4 0 0 1 -4,4 H1885 Z" fill="#555"/>
<path d="M1848,382 L1855,385 V391 C1855,395 1851,398 1848,399 C1845,398 1841,395 1841,391 V385 Z" fill="none" stroke="#a8a8a8" stroke-width="1.3"/>
<use href="#copy" x="1872.5" y="390.5"/>
<use href="#x" x="1898" y="390.5" stroke="#e6e6e6"/>

<path d="M1638,424 l6,4 -6,4 Z" fill="#a8a8a8"/>
<text x="1651" y="434" class="h">Preview</text>
<use href="#grip" x="1898" y="425"/>
<path d="M1634,455 H1643 L1638.5,462 Z" fill="#a8a8a8"/>
<text x="1651" y="464" class="h">Surface</text>
<use href="#grip" x="1898" y="455"/>
<rect x="1624" y="473" width="295" height="120" fill="#3d3d3d"/>
<text x="1723" y="500" text-anchor="end" class="m">Surface</text>
<rect x="1734.5" y="484" width="151" height="24" rx="5" fill="#282828" stroke="#373737"/>
<circle cx="1747" cy="495.5" r="4" fill="#50c864"/>
<text x="1760" y="500" class="m">Background</text>
<text x="1723" y="544" text-anchor="end" class="m">Color</text>
<path d="M1739,528 H1758 V551 H1739 a5,5 0 0 1 -5,-5 V533 a5,5 0 0 1 5,-5 Z" fill="#282828"/>
<path d="M1758,528 H1880 a5,5 0 0 1 5,5 V546 a5,5 0 0 1 -5,5 H1758 Z" fill="#444"/>
<circle cx="1747" cy="539.5" r="4" fill="#c7c729"/>
<circle cx="1898.5" cy="539.5" r="2.2" fill="#e6e6e6"/>
<text x="1723" y="575" text-anchor="end" class="m">Strength</text>
<path d="M1739,559 H1758 V582 H1739 a5,5 0 0 1 -5,-5 V564 a5,5 0 0 1 5,-5 Z" fill="#282828"/>
<path d="M1758,559 H1880 a5,5 0 0 1 5,5 V577 a5,5 0 0 1 -5,5 H1758 Z" fill="#595959"/>
<circle cx="1747" cy="570.5" r="4" fill="#a1a1a1"/>
<text x="1821" y="575" text-anchor="middle" class="m">1.000</text>
<circle cx="1898.5" cy="570.5" r="2.2" fill="#e6e6e6"/>

<use href="#tri" x="1638" y="608"/><text x="1651" y="614" class="h">Volume</text><use href="#grip" x="1898" y="604"/>
<use href="#tri" x="1638" y="638"/><rect x="1650" y="632" width="14" height="14" rx="2" fill="#555"/><text x="1672" y="644" class="h">Ambient Occlusion</text><use href="#grip" x="1898" y="634"/>
<use href="#tri" x="1638" y="668"/><text x="1651" y="674" class="h">Ray Visibility</text><use href="#grip" x="1898" y="664"/>
<use href="#tri" x="1638" y="698"/><text x="1651" y="704" class="h">Settings</text><use href="#grip" x="1898" y="694"/>
<use href="#tri" x="1638" y="728"/><text x="1651" y="734" class="h">Viewport Display</text><use href="#grip" x="1898" y="724"/>
<use href="#tri" x="1638" y="758"/><text x="1651" y="764" class="h">Custom Properties</text><use href="#grip" x="1898" y="754"/>

<!-- POPUP -->
<path d="M1359.5,402 H1673 V698 a5,5 0 0 1 -5,5 H1364.5 a5,5 0 0 1 -5,-5 Z" fill="#1f2122" fill-opacity=".935" stroke="#141414"/>
<rect x="1363" y="418" width="306.5" height="22" fill="#5680c2"/>
<rect x="1367" y="420" width="19" height="19" fill="#a29d9f"/>
<text x="1392.5" y="433.5" style="fill:#f2f2f2">0 Dynamic_1</text>
<rect x="1367" y="444" width="19" height="19" fill="#424242"/>
<text x="1400" y="457" style="fill:#e6e6e6">World</text>
<rect x="1366.5" y="670" width="299.5" height="23.5" rx="1.5" fill="#808080" stroke="#6a6a6a"/>
<circle cx="1388.5" cy="679.5" r="5.6" fill="none" stroke="#efefef" stroke-width="1.3"/>
<path d="M1384,684 L1378,690.5" stroke="#efefef" stroke-width="1.4"/>
<rect x="1402.5" y="671" width="1.6" height="22" fill="#3fa0f0"/>

<!-- RED SCRIBBLES -->
<g class="red" transform="translate(1180,90) scale(.33333)">
<path d="M552,755 C552,700 548,640 555,625 C575,600 625,605 625,635 C625,665 585,680 555,690"/>
<path d="M632,735 L642,620 M640,640 C655,625 675,610 695,607"/>
<path d="M690,675 C720,672 752,665 750,640 C740,615 690,640 680,680 C672,720 700,745 725,738 C745,730 760,715 768,702"/>
<path d="M848,600 C825,610 800,625 805,645 C825,665 855,670 852,700 C845,725 825,740 808,745"/>
<path d="M938,585 C915,600 885,615 890,630 C910,650 950,665 945,695 C935,715 910,722 890,727"/>
</g>
<g class="red" transform="translate(1270,280) scale(.4146,.33333)">
<path d="M195,245 L268,243 M228,210 C222,240 222,265 262,298"/>
<path d="M305,200 L300,312 M300,285 C315,255 345,235 352,255 C358,275 355,295 350,305"/>
<path d="M440,245 C405,240 375,265 372,300 C380,320 415,290 440,235 C435,270 435,295 445,308"/>
<path d="M445,225 L527,225 M490,195 C485,240 465,280 468,310 C480,300 500,285 515,268"/>
<path d="M925,282 C870,255 800,260 700,260 C630,268 585,290 570,345"/>
<path d="M540,335 L625,352 L625,372 L590,392 L555,412 Z" style="fill:#f00"/>
<path d="M895,258 C930,235 965,260 972,310 C980,360 960,405 925,400 C890,395 868,350 875,305 C880,280 895,265 915,255"/>
</g>
</svg>
</body>
</html>
